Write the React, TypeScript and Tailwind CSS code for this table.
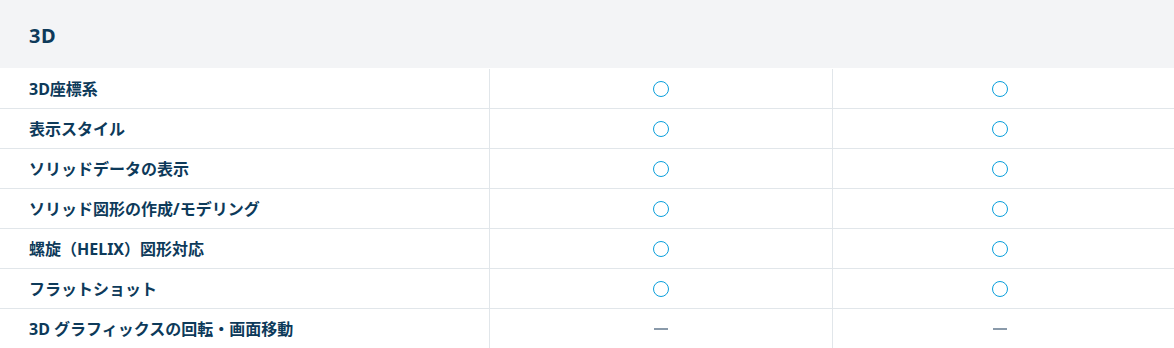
const ROWS: { label: string; a: boolean | null; b: boolean | null }[] = [
  { label: '3D座標系', a: true, b: true },
  { label: '表示スタイル', a: true, b: true },
  { label: 'ソリッドデータの表示', a: true, b: true },
  { label: 'ソリッド図形の作成/モデリング', a: true, b: true },
  { label: '螺旋（HELIX）図形対応', a: true, b: true },
  { label: 'フラットショット', a: true, b: true },
  { label: '3D グラフィックスの回転・画面移動', a: null, b: null },
]

function Mark({ on }: { on: boolean | null }) {
  if (on) return <span className="block w-4 h-4 rounded-full border-[1.5px] border-[#0a9fdc]" />
  return <span className="block w-[14px] h-[2px] bg-[#8a9aaa]" />
}

export default function App() {
  return (
    <div className="w-[1174px] bg-white text-[#0d3a5a]" style={{ fontFamily: '"Noto Sans", "Noto Sans CJK JP", sans-serif' }}>
      {/* section header */}
      <div className="h-[68px] bg-[#f3f4f6] flex items-center px-[29px] pt-[3px]">
        <h2 className="text-[20px] font-bold tracking-wide">3D</h2>
      </div>

      {/* rows */}
      <div>
        {ROWS.map((r, i) => (
          <div
            key={i}
            className={`grid grid-cols-[489px_343px_1fr] h-10 border-t border-[#e1e6ea] ${i === 0 ? 'border-t-transparent' : ''}`}
          >
            <div className="flex items-center pl-[29px] text-base font-bold">{r.label}</div>
            <div className="flex items-center justify-center border-l border-[#e1e6ea]">
              <Mark on={r.a} />
            </div>
            <div className="flex items-center justify-center border-l border-[#e1e6ea] pr-2">
              <Mark on={r.b} />
            </div>
          </div>
        ))}
      </div>
    </div>
  )
}
